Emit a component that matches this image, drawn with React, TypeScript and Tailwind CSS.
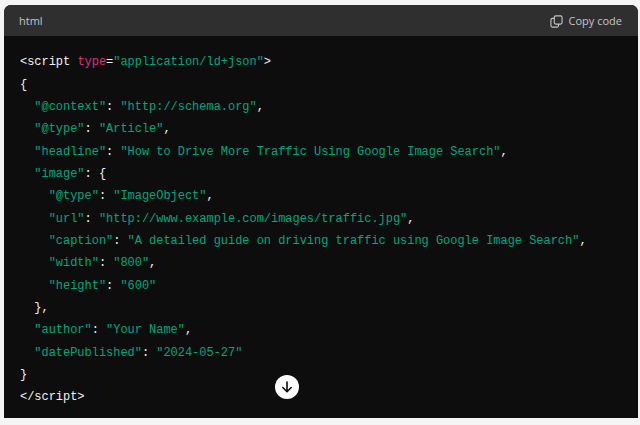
import React from "react";

// token colours used in the code block
const TAG = "text-[#f2f2f2]";
const ATTR = "text-[#df3079]";
const STR = "text-[#00a67d]";

type Token = [string, string];

const CODE_LINES: Token[][] = [
  [[TAG, "<script "], [ATTR, "type"], [TAG, "="], [STR, '"application/ld+json"'], [TAG, ">"]],
  [[TAG, "{"]],
  [[TAG, "  "], [STR, '"@context"'], [TAG, ": "], [STR, '"http://schema.org"'], [TAG, ","]],
  [[TAG, "  "], [STR, '"@type"'], [TAG, ": "], [STR, '"Article"'], [TAG, ","]],
  [[TAG, "  "], [STR, '"headline"'], [TAG, ": "], [STR, '"How to Drive More Traffic Using Google Image Search"'], [TAG, ","]],
  [[TAG, "  "], [STR, '"image"'], [TAG, ": {"]],
  [[TAG, "    "], [STR, '"@type"'], [TAG, ": "], [STR, '"ImageObject"'], [TAG, ","]],
  [[TAG, "    "], [STR, '"url"'], [TAG, ": "], [STR, '"http://www.example.com/images/traffic.jpg"'], [TAG, ","]],
  [[TAG, "    "], [STR, '"caption"'], [TAG, ": "], [STR, '"A detailed guide on driving traffic using Google Image Search"'], [TAG, ","]],
  [[TAG, "    "], [STR, '"width"'], [TAG, ": "], [STR, '"800"'], [TAG, ","]],
  [[TAG, "    "], [STR, '"height"'], [TAG, ": "], [STR, '"600"']],
  [[TAG, "  },"]],
  [[TAG, "  "], [STR, '"author"'], [TAG, ": "], [STR, '"Your Name"'], [TAG, ","]],
  [[TAG, "  "], [STR, '"datePublished"'], [TAG, ": "], [STR, '"2024-05-27"']],
  [[TAG, "}"]],
  [[TAG, "</script>"]],
];

function CopyIcon() {
  return (
    <svg width="13" height="13" viewBox="0 0 14 14" fill="none" stroke="currentColor" strokeWidth="1.2">
      <rect x="4.6" y="1" width="8.4" height="8.8" rx="1.6" />
      <path d="M4.6 3.6H2.6A1.6 1.6 0 0 0 1 5.2v6.2A1.6 1.6 0 0 0 2.6 13h5a1.6 1.6 0 0 0 1.6-1.6V9.8" />
    </svg>
  );
}

export default function App() {
  return (
    <div className="w-[640px] h-[425px] overflow-hidden bg-[#f4f4f4] pt-[5px] pl-[4px] pr-[2px] font-['Open_Sans','Liberation_Sans',sans-serif]">
      <div className="relative h-[413px] bg-[#0d0d0d] rounded-t-[7px] overflow-hidden">
        {/* Header */}
        <div className="h-[31px] bg-[#2f2f2f] flex items-center justify-between pt-[1px] pl-[15px] pr-[16px] text-[11px] text-[#c5c5c5]">
          <span>html</span>
          <span className="flex items-center gap-[6px]">
            <CopyIcon />
            Copy code
          </span>
        </div>

        {/* Code */}
        <div className="pt-[15.4px] pl-[16px] font-['Liberation_Mono',monospace] text-[12px] tracking-[-0.03px] leading-[22.33px] whitespace-pre">
          {CODE_LINES.map((line, i) => (
            <div key={i}>
              {line.map(([color, text], j) => (
                <span key={j} className={color}>{text}</span>
              ))}
            </div>
          ))}
        </div>

        {/* Scroll button */}
        <div className="absolute left-[271px] top-[370px] w-[24px] h-[24px] rounded-full bg-white flex items-center justify-center">
          <svg width="14" height="14" viewBox="0 0 14 14" fill="none" stroke="#0d0d0d" strokeWidth="1.6" strokeLinecap="round" strokeLinejoin="round">
            <path d="M7 2v9.5M2.8 7.5 7 11.7l4.2-4.2" />
          </svg>
        </div>
      </div>
    </div>
  );
}
